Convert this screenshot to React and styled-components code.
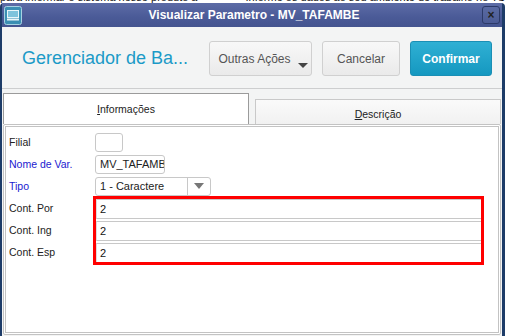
import React from 'react'
import styled, { createGlobalStyle } from 'styled-components'

const GlobalStyle = createGlobalStyle`
  html, body {
    margin: 0;
    padding: 0;
    background: #ffffff;
  }
  body {
    font-family: "Liberation Sans", Arial, sans-serif;
    width: 505px;
    height: 336px;
    overflow: hidden;
  }
`

const BackStrip = styled.div`
  height: 3px;
  overflow: hidden;
  display: flex;
  gap: 48px;
  background: #fff;
`

const BackText = styled.span`
  font-size: 11px;
  line-height: 11px;
  margin-top: -8px;
  color: #111;
  white-space: nowrap;
  padding-left: ${p => p.$left || 0}px;
`

const Window = styled.div`
  height: 333px;
  display: flex;
  flex-direction: column;
  border-left: 2px solid #1d3c68;
  border-right: 3px solid #1d3c68;
  border-radius: 4px 4px 0 0;
  background: #f3f4f4;
  box-sizing: border-box;
`

const TitleBar = styled.div`
  height: 24px;
  flex: none;
  display: flex;
  align-items: center;
  padding: 0 2px 0 2px;
  background: linear-gradient(#5d6ca6, #4a5a97 60%, #44548f);
`

const Title = styled.div`
  flex: 1;
  text-align: center;
  color: #fff;
  font-size: 12px;
  font-weight: bold;
  padding-left: 4px;
`

const CloseBox = styled.div`
  width: 16px;
  height: 16px;
  border: 1px solid #2c3a68;
  border-radius: 3px;
  background: linear-gradient(#5a6aa2, #4b5b95);
  display: flex;
  align-items: center;
  justify-content: center;
  color: #222;
  font-size: 12px;
  font-weight: bold;
  line-height: 1;
`

const Header = styled.div`
  height: 59px;
  flex: none;
  display: flex;
  align-items: center;
  padding: 2px 10px 0 20px;
  border-bottom: 1px solid #cdcecf;
`

const AppTitle = styled.div`
  flex: 1;
  color: #1b9ac7;
  font-size: 18px;
  margin-top: -1px;
`

const Buttons = styled.div`
  display: flex;
  gap: 10px;
`

const Button = styled.div`
  position: relative;
  width: ${p => p.$w}px;
  height: 35px;
  box-sizing: border-box;
  border-radius: 3px;
  display: flex;
  align-items: center;
  justify-content: center;
  font-size: 12px;
  padding-right: ${p => (p.$menu ? 12 : 0)}px;
  color: ${p => (p.$primary ? '#fff' : '#555')};
  font-weight: ${p => (p.$primary ? 'bold' : 'normal')};
  border: 1px solid ${p => (p.$primary ? '#1a8fb5' : '#d0d0d0')};
  background: ${p =>
    p.$primary
      ? 'linear-gradient(#2fb0d4, #1598c0)'
      : 'linear-gradient(#f8f8f8, #eaeaea)'};
`

const MenuArrow = styled.span`
  position: absolute;
  right: 3px;
  bottom: 7px;
  width: 0;
  height: 0;
  border-left: 5px solid transparent;
  border-right: 5px solid transparent;
  border-top: 5px solid #444;
`

const Tabs = styled.div`
  height: 35px;
  flex: none;
  display: flex;
  align-items: flex-end;
  gap: 6px;
  padding: 0 1px;
`

const Tab = styled.div`
  width: 247px;
  box-sizing: border-box;
  height: ${p => (p.$active ? 31 : 25)}px;
  display: flex;
  align-items: center;
  justify-content: center;
  padding-top: ${p => (p.$active ? 0 : 4)}px;
  font-size: 10.5px;
  color: #222;
  border: 1px solid ${p => (p.$active ? '#9b9b9b' : '#c9c9c9')};
  border-bottom: none;
  background: ${p => (p.$active ? '#fff' : 'linear-gradient(#fafafa, #f1f1f1)')};

  u {
    text-decoration: underline;
    text-underline-offset: 1px;
  }
`

const Panel = styled.div`
  flex: 1;
  margin: 0 1px 1px;
  border: 3px double #c3c3c3;
  border-radius: 2px;
  background: #fff;
  padding: 4px 14px 0 3px;
`

const Form = styled.div`
  display: grid;
  grid-template-columns: 84px 1fr;
  grid-template-rows: repeat(6, 22px);
  align-items: center;
`

const Label = styled.div`
  grid-column: 1;
  font-size: 10.5px;
  color: ${p => (p.$blue ? '#1a1ad0' : '#222')};
`

const Field = styled.div`
  grid-column: 2;
  width: ${p => p.$w}px;
  height: 19px;
  margin-left: 2px;
  box-sizing: border-box;
  border: 1px solid #c8c8c8;
  border-radius: 3px;
  display: flex;
  align-items: center;
  padding-left: 4px;
  font-size: 11px;
  color: #222;
  background: #fff;
  overflow: hidden;
  white-space: nowrap;
`

const Select = styled(Field)`
  padding: 0;
`

const SelectText = styled.div`
  flex: 1;
  padding-left: 4px;
`

const SelectButton = styled.div`
  width: 22px;
  height: 100%;
  border-left: 1px solid #c8c8c8;
  display: flex;
  align-items: center;
  justify-content: center;

  &::after {
    content: '';
    border-left: 5px solid transparent;
    border-right: 5px solid transparent;
    border-top: 6px solid #777;
  }
`

const ContField = styled.div`
  grid-column: 2;
  grid-row: ${p => p.$row};
  align-self: end;
  height: 20px;
  margin: 0 2px 0 3px;
  box-sizing: border-box;
  border: 1px solid #c8c8c8;
  border-left-color: #dcdcdc;
  display: flex;
  align-items: center;
  padding-left: 3px;
  font-size: 11px;
  color: #111;
`

const Highlight = styled.div`
  grid-column: 2;
  grid-row: 4 / span 3;
  align-self: stretch;
  margin: -1px 0 -2px;
  border: 3px solid #ff0000;
  z-index: 1;
  pointer-events: none;
`

function AppIcon() {
  return (
    <svg width="18" height="19" viewBox="0 0 18 19">
      <rect x="0.5" y="0.5" width="17" height="18" rx="2" fill="#3b8fb3" stroke="#a7d3e3" />
      <rect x="3.5" y="4.5" width="11" height="7" fill="#7fc3dc" stroke="#eaf6fa" />
      <rect x="3" y="12.5" width="12" height="2" fill="#eaf6fa" />
    </svg>
  )
}

export default function App() {
  return (
    <>
      <GlobalStyle />
      <BackStrip>
        <BackText>para informar o sistema nesse produto a</BackText>
        <BackText $left={0}>Informe os dados ao seu ambiente de trabalho no TSS</BackText>
      </BackStrip>
      <Window>
        <TitleBar>
          <AppIcon />
          <Title>Visualizar Parametro - MV_TAFAMBE</Title>
          <CloseBox>×</CloseBox>
        </TitleBar>
        <Header>
          <AppTitle>Gerenciador de Ba...</AppTitle>
          <Buttons>
            <Button $w={103} $menu>
              Outras Ações
              <MenuArrow />
            </Button>
            <Button $w={78}>Cancelar</Button>
            <Button $w={82} $primary>Confirmar</Button>
          </Buttons>
        </Header>
        <Tabs>
          <Tab $active><span><u>I</u>nformações</span></Tab>
          <Tab><span><u>D</u>escrição</span></Tab>
        </Tabs>
        <Panel>
          <Form>
            <Label>Filial</Label>
            <Field $w={28} />
            <Label $blue>Nome de Var.</Label>
            <Field $w={70}>MV_TAFAMB</Field>
            <Label $blue>Tipo</Label>
            <Select $w={116}>
              <SelectText>1 - Caractere</SelectText>
              <SelectButton />
            </Select>
            <Label style={{ gridRow: 4 }}>Cont. Por</Label>
            <ContField $row={4}>2</ContField>
            <Label style={{ gridRow: 5 }}>Cont. Ing</Label>
            <ContField $row={5}>2</ContField>
            <Label style={{ gridRow: 6 }}>Cont. Esp</Label>
            <ContField $row={6}>2</ContField>
            <Highlight />
          </Form>
        </Panel>
      </Window>
    </>
  )
}
